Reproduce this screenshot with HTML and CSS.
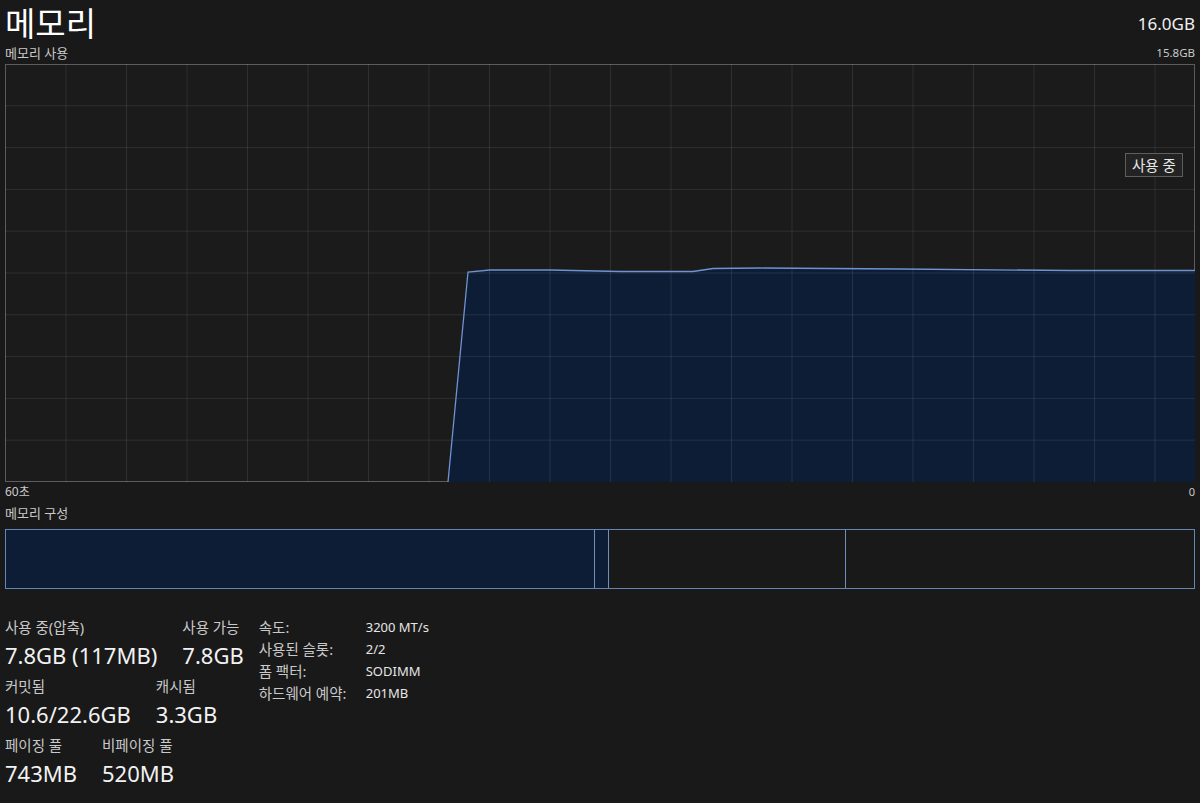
FILE: index.html
```html
<!DOCTYPE html>
<html lang="ko">
<head>
<meta charset="utf-8">
<title>메모리</title>
<link rel="stylesheet" href="styles.css">
</head>
<body>
<div class="page">
  <header class="head">
    <h1 class="title">메모리</h1>
    <div class="total">16.0GB</div>
  </header>
  <div class="sub">
    <span class="ko">메모리 사용</span>
    <span>15.8GB</span>
  </div>
  <div class="chart">
    <svg class="chart-svg" width="1190" height="418" viewBox="0 0 1190 418">
      <polygon class="area" points="443,418 463,208 485,206 545,206 615,207.5 688,207.5 708,204.5 755,204 895,205 1065,206.5 1190,206.5 1190,418"/>
      <g class="grid">
        <line x1="61" y1="0" x2="61" y2="418"/>
        <line x1="121.5" y1="0" x2="121.5" y2="418"/>
        <line x1="182" y1="0" x2="182" y2="418"/>
        <line x1="242.5" y1="0" x2="242.5" y2="418"/>
        <line x1="303" y1="0" x2="303" y2="418"/>
        <line x1="363.5" y1="0" x2="363.5" y2="418"/>
        <line x1="424" y1="0" x2="424" y2="418"/>
        <line x1="484.5" y1="0" x2="484.5" y2="418"/>
        <line x1="545" y1="0" x2="545" y2="418"/>
        <line x1="605.5" y1="0" x2="605.5" y2="418"/>
        <line x1="666" y1="0" x2="666" y2="418"/>
        <line x1="726.5" y1="0" x2="726.5" y2="418"/>
        <line x1="787" y1="0" x2="787" y2="418"/>
        <line x1="847.5" y1="0" x2="847.5" y2="418"/>
        <line x1="908" y1="0" x2="908" y2="418"/>
        <line x1="968.5" y1="0" x2="968.5" y2="418"/>
        <line x1="1029" y1="0" x2="1029" y2="418"/>
        <line x1="1089.5" y1="0" x2="1089.5" y2="418"/>
        <line x1="1150" y1="0" x2="1150" y2="418"/>
        <line x1="0" y1="41.8" x2="1190" y2="41.8"/>
        <line x1="0" y1="83.6" x2="1190" y2="83.6"/>
        <line x1="0" y1="125.4" x2="1190" y2="125.4"/>
        <line x1="0" y1="167.2" x2="1190" y2="167.2"/>
        <line x1="0" y1="209" x2="1190" y2="209"/>
        <line x1="0" y1="250.8" x2="1190" y2="250.8"/>
        <line x1="0" y1="292.6" x2="1190" y2="292.6"/>
        <line x1="0" y1="334.4" x2="1190" y2="334.4"/>
        <line x1="0" y1="376.2" x2="1190" y2="376.2"/>
      </g>
      <polyline class="line" points="443,418 463,208 485,206 545,206 615,207.5 688,207.5 708,204.5 755,204 895,205 1065,206.5 1190,206.5"/>
    </svg>
    <div class="tip">사용 중</div>
  </div>
  <div class="axis">
    <span class="ko">60초</span>
    <span>0</span>
  </div>
  <div class="sub comp-label"><span class="ko">메모리 구성</span></div>
  <div class="comp">
    <div class="seg seg-used" style="width:589px"></div>
    <div class="seg seg-mod" style="width:14px"></div>
    <div class="seg seg-standby" style="width:237px"></div>
    <div class="seg seg-free"></div>
  </div>
  <section class="stats">
    <div class="stats-left">
      <div class="row">
        <div class="cell"><div class="lbl">사용 중(압축)</div><div class="val">7.8GB (117MB)</div></div>
        <div class="cell"><div class="lbl">사용 가능</div><div class="val">7.8GB</div></div>
      </div>
      <div class="row">
        <div class="cell"><div class="lbl">커밋됨</div><div class="val">10.6/22.6GB</div></div>
        <div class="cell"><div class="lbl">캐시됨</div><div class="val">3.3GB</div></div>
      </div>
      <div class="row">
        <div class="cell"><div class="lbl">페이징 풀</div><div class="val">743MB</div></div>
        <div class="cell"><div class="lbl">비페이징 풀</div><div class="val">520MB</div></div>
      </div>
    </div>
    <dl class="stats-right">
      <dt>속도:</dt><dd>3200 MT/s</dd>
      <dt>사용된 슬롯:</dt><dd>2/2</dd>
      <dt>폼 팩터:</dt><dd>SODIMM</dd>
      <dt>하드웨어 예약:</dt><dd>201MB</dd>
    </dl>
  </section>
</div>
</body>
</html>
```

FILE: styles.css
```css
* { box-sizing: border-box; }
html, body {
  margin: 0;
  padding: 0;
  background: #191919;
}
body {
  font-family: "Noto Sans", "Noto Sans CJK KR", sans-serif;
  color: #e6e6e6;
  width: 1200px;
  height: 803px;
  overflow: hidden;
}
.page {
  padding: 0 5px;
}
.head {
  display: flex;
  justify-content: space-between;
  align-items: flex-end;
  height: 42px;
}
.title {
  margin: 0;
  font-weight: 400;
  font-size: 33px;
  line-height: 44px;
  height: 42px;
  color: #ffffff;
  font-family: "Noto Sans CJK KR", sans-serif;
}
.total {
  font-size: 17px;
  line-height: 24px;
  color: #f0f0f0;
  margin-bottom: 6px;
}
.sub {
  display: flex;
  justify-content: space-between;
  align-items: center;
  font-size: 11.5px;
  line-height: 22px;
  height: 22px;
  color: #c9c9c9;
}
.ko {
  font-size: 13px;
}
.chart {
  position: relative;
  width: 1190px;
  height: 418px;
  border: 1px solid #5c5c5c;
  background: #1b1b1b;
}
.chart-svg {
  position: absolute;
  left: -1px;
  top: -1px;
  display: block;
}
.grid line {
  stroke: rgba(255, 255, 255, 0.09);
  stroke-width: 1;
}
.area {
  fill: #0e1d36;
}
.line {
  fill: none;
  stroke: #6f93d0;
  stroke-width: 1.3;
}
.tip {
  position: absolute;
  left: 1119px;
  top: 88px;
  height: 24px;
  padding: 0 6px;
  border: 1px solid #5e5e5e;
  background: #232323;
  font-size: 14.5px;
  line-height: 22px;
  color: #e8e8e8;
}
.axis {
  display: flex;
  justify-content: space-between;
  font-size: 11px;
  line-height: 20px;
  height: 20px;
  color: #c9c9c9;
}
.axis .ko {
  font-size: 12px;
}
.comp-label {
  height: 27px;
  line-height: 22px;
  align-items: flex-start;
}
.comp {
  display: flex;
  width: 1190px;
  height: 60px;
  border: 1px solid #6585b3;
}
.seg {
  height: 100%;
  border-right: 1px solid #6f8fbf;
}
.seg-used, .seg-mod {
  background: #0e1d36;
}
.seg-free {
  flex: 1;
  border-right: none;
}
.stats {
  display: flex;
  gap: 15px;
  margin-top: 29px;
}
.stats-left {
  display: flex;
  flex-direction: column;
}
.row {
  display: flex;
  gap: 25px;
  margin-bottom: 3px;
}
.lbl {
  font-size: 14.5px;
  line-height: 18px;
  color: #c9c9c9;
}
.val {
  font-size: 22px;
  line-height: 38px;
  color: #f2f2f2;
}
.stats-right {
  display: grid;
  grid-template-columns: 107px auto;
  grid-auto-rows: 22px;
  margin: 0;
  line-height: 18px;
  align-content: start;
}
.stats-right dt {
  font-size: 14.5px;
  color: #c9c9c9;
}
.stats-right dd {
  margin: 0;
  font-size: 13px;
  color: #e6e6e6;
}
```
